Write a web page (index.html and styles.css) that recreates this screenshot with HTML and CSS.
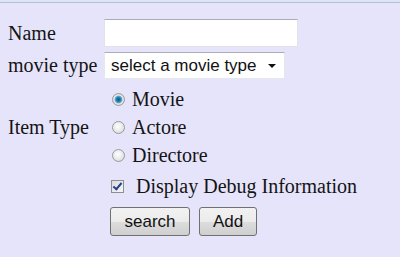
FILE: index.html
```html
<!DOCTYPE html>
<html lang="en">

<head>
  <meta charset="UTF-8">
  <title>Search</title>
  <link rel="stylesheet" href="styles.css">
</head>

<body>
  <div class="topBar"></div>

  <form class="searchForm">
    <div class="row rowName">
      <label class="label" for="name">Name</label>
      <input type="text" id="name" class="textBox">
    </div>

    <div class="row rowType">
      <label class="label" for="type">movie type</label>
      <div class="selectWrap">
        <select id="type" class="selectBox">
          <option>select a movie type</option>
        </select>
      </div>
    </div>

    <div class="row rowItem">
      <span class="label">Item Type</span>
      <div class="radioList">
        <label class="radioItem"><input type="radio" name="item" checked><span>Movie</span></label>
        <label class="radioItem"><input type="radio" name="item"><span>Actore</span></label>
        <label class="radioItem"><input type="radio" name="item"><span>Directore</span></label>
      </div>
    </div>

    <div class="row rowDebug">
      <span class="label"></span>
      <label class="checkItem"><input type="checkbox" checked><span>Display Debug Information</span></label>
    </div>

    <div class="row rowButtons">
      <span class="label"></span>
      <div class="buttons">
        <button type="button" class="btn btnSearch">search</button>
        <button type="button" class="btn btnAdd">Add</button>
      </div>
    </div>
  </form>
</body>

</html>
```

FILE: styles.css
```css
html,
body {
  height: 100%;
}

body {
  margin: 0;
  background-color: #e6e4fb;
  font-family: "Liberation Serif", "Times New Roman", serif;
  font-size: 20px;
  color: #141414;
  overflow: hidden;
}

.topBar {
  height: 2px;
  background-color: #dfe3f5;
  border-bottom: 1px solid #b3c2d6;
}

.searchForm {
  padding: 16px 0 0 8px;
}

.row {
  display: flex;
  align-items: center;
}

.label {
  width: 96px;
  flex: none;
}

.rowType {
  margin-top: 5px;
}

.rowItem {
  margin-top: 6px;
}

.rowDebug {
  margin-top: 3px;
}

.rowButtons {
  margin-top: 7px;
}

.textBox {
  box-sizing: border-box;
  width: 194px;
  height: 28px;
  margin: 0;
  padding: 2px 4px;
  background: #fff;
  border: 1px solid #e2e3ea;
  border-top-color: #abadb3;
  border-radius: 0;
  outline: none;
}

.selectWrap {
  position: relative;
  width: 181px;
  height: 27px;
}

.selectBox {
  appearance: none;
  -webkit-appearance: none;
  box-sizing: border-box;
  width: 100%;
  height: 100%;
  margin: 0;
  padding: 0 0 0 6px;
  background: #fff;
  border: 1px solid #e6e6ee;
  border-top-color: #acacb4;
  border-radius: 0;
  font-family: "Liberation Sans", Arial, sans-serif;
  font-size: 17px;
  color: #111;
}

.selectWrap::after {
  content: "";
  position: absolute;
  right: 9px;
  top: 12px;
  border-left: 4px solid transparent;
  border-right: 4px solid transparent;
  border-top: 4px solid #111;
  pointer-events: none;
}

.radioList {
  display: flex;
  flex-direction: column;
  padding-left: 8px;
}

.radioItem,
.checkItem {
  display: flex;
  align-items: center;
  height: 28px;
}

.radioItem input {
  appearance: none;
  -webkit-appearance: none;
  box-sizing: border-box;
  width: 13px;
  height: 13px;
  margin: 0 7px 0 0;
  border: 1px solid #9a9a9a;
  border-radius: 50%;
  background: radial-gradient(circle at 45% 40%, #ffffff 0%, #e8e8e8 55%, #cfcfcf 100%);
}

.radioItem input:checked {
  background: radial-gradient(circle at 50% 50%, #0d4e77 0%, #2f86b8 30%, #5fb0d8 45%, #e6e6e6 55%, #cfcfcf 100%);
}

.checkItem {
  padding-left: 7px;
}

.checkItem input {
  appearance: none;
  -webkit-appearance: none;
  position: relative;
  box-sizing: border-box;
  width: 13px;
  height: 13px;
  margin: 0 12px 0 0;
  border: 1px solid #8f8f8f;
  background: linear-gradient(135deg, #dcdcdc 0%, #f6f6f6 100%);
}

.checkItem input:checked::after {
  content: "";
  position: absolute;
  left: 3px;
  top: 0px;
  width: 3px;
  height: 7px;
  border-right: 2px solid #24408e;
  border-bottom: 2px solid #24408e;
  transform: rotate(40deg);
}

.buttons {
  display: flex;
  gap: 9px;
  padding-left: 6px;
}

.btn {
  box-sizing: border-box;
  height: 29px;
  margin: 0;
  padding: 0;
  border: 1px solid #707070;
  border-radius: 3px;
  background: linear-gradient(#f2f2f2 0%, #ebebeb 50%, #dddddd 51%, #cfcfcf 100%);
  font-family: "Liberation Sans", Arial, sans-serif;
  font-size: 17px;
  color: #111;
}

.btnSearch {
  width: 80px;
}

.btnAdd {
  width: 58px;
}
```
